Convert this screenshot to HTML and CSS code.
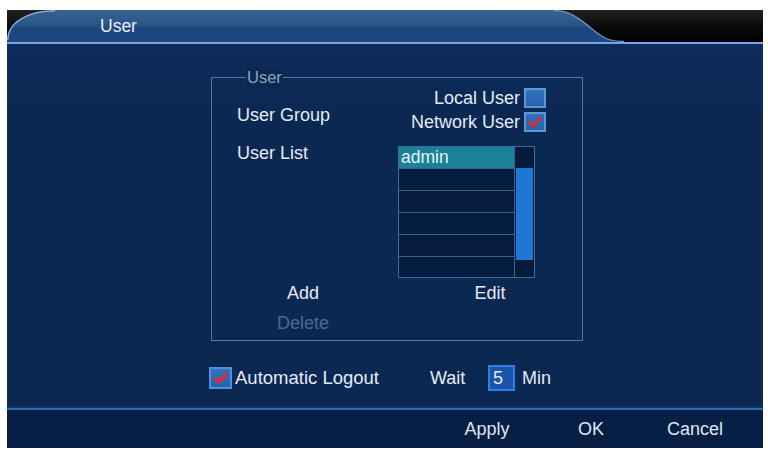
FILE: index.html
```html
<!DOCTYPE html>
<html>
<head>
<meta charset="utf-8">
<link rel="stylesheet" href="styles.css">
</head>
<body>
<div class="frame">
  <div class="titlebar">
    <div class="tab">
      <svg class="tab-bg" width="617" height="32" viewBox="0 0 617 32">
        <defs>
          <linearGradient id="tg" x1="0" y1="0" x2="0" y2="1">
            <stop offset="0" stop-color="#37628f"/>
            <stop offset="0.45" stop-color="#2b5588"/>
            <stop offset="0.6" stop-color="#1c457a"/>
            <stop offset="1" stop-color="#1d4a82"/>
          </linearGradient>
        </defs>
        <path d="M0,32 L0,30 C0,13 20,0 48,0 L547,0 C562,0 572,8 585,19 C597,29 603,32 617,32 Z" fill="url(#tg)"/>
        <path d="M0.8,30 C0.8,13 20,0.8 48,0.8" fill="none" stroke="#8fb0e0" stroke-width="1.3"/>
        <path d="M547,0.6 C562,0.6 572,8 585,19 C597,29 603,31.5 617,31.5" fill="none" stroke="#6f92c4" stroke-width="1.3"/>
      </svg>
      <span class="title">User</span>
    </div>
  </div>
  <div class="content">
    <div class="group">
      <span class="legend">User</span>
      <div class="row-group">
        <div class="label lbl-group">User Group</div>
        <div class="options">
          <div class="opt"><span>Local User</span><span class="cb"></span></div>
          <div class="opt"><span>Network User</span><span class="cb"><svg class="chk" viewBox="0 0 18 16"><path d="M3 9 L7 12.5 L15 3.5" fill="none" stroke="#e22a3c" stroke-width="3.6" stroke-linecap="round" stroke-linejoin="round"/></svg></span></div>
        </div>
      </div>
      <div class="row-list">
        <div class="label lbl-list">User List</div>
        <div class="listbox">
          <div class="rows">
            <div class="lrow sel">admin</div>
            <div class="lrow"></div>
            <div class="lrow"></div>
            <div class="lrow"></div>
            <div class="lrow"></div>
            <div class="lrow last"></div>
          </div>
          <div class="sb"><div class="thumb"></div></div>
        </div>
      </div>
      <div class="row-btns">
        <span class="btn add">Add</span>
        <span class="btn edit">Edit</span>
      </div>
      <div class="row-del">
        <span class="btn del">Delete</span>
      </div>
    </div>
    <div class="logout-row">
      <span class="cb cb-big"><svg class="chk" viewBox="0 0 18 16"><path d="M3 9 L7 12.5 L15 3.5" fill="none" stroke="#e22a3c" stroke-width="3.8" stroke-linecap="round" stroke-linejoin="round"/></svg></span>
      <span class="lbl-logout">Automatic Logout</span>
      <span class="lbl-wait">Wait</span>
      <span class="num">5</span>
      <span class="lbl-min">Min</span>
    </div>
  </div>
  <div class="sep"></div>
  <div class="footer">
    <span class="fbtn">Apply</span>
    <span class="fbtn">OK</span>
    <span class="fbtn">Cancel</span>
  </div>
</div>
</body>
</html>
```
FILE: styles.css
```css
html, body {
  margin: 0;
  padding: 0;
  background: #ffffff;
}
body {
  font-family: "Liberation Sans", Arial, sans-serif;
  font-size: 18px;
  color: #e4ebf3;
}
.frame {
  margin-left: 7px;
  margin-top: 10px;
  width: 756px;
  height: 438px;
  display: flex;
  flex-direction: column;
  background: #0b2853;
}
.titlebar {
  height: 32px;
  flex: none;
  display: flex;
  background: linear-gradient(#222222, #0a0a0a 55%, #000000);
  border-bottom: 2px solid #78a4e2;
}
.tab {
  position: relative;
  width: 617px;
  height: 32px;
  display: flex;
  align-items: center;
}
.tab-bg {
  position: absolute;
  left: 0;
  top: 0;
}
.title {
  position: relative;
  padding-left: 93px;
  font-size: 17.5px;
  color: #e8eef6;
}
.content {
  height: 364px;
  flex: none;
  background: linear-gradient(#0d2c5a, #0b2853 20%);
}
.group {
  position: relative;
  box-sizing: border-box;
  margin-top: 33px;
  margin-left: 204px;
  width: 372px;
  height: 264px;
  border: 1px solid #4e7aa8;
  padding: 9px 0 6px 0;
}
.legend {
  position: absolute;
  left: 34px;
  top: -11px;
  line-height: 20px;
  font-size: 16.5px;
  padding: 0 1px;
  background: #0b2853;
  color: #8ea2b8;
}
.label {
  line-height: 22px;
}
.row-group {
  display: flex;
  justify-content: space-between;
  padding-left: 25px;
  padding-right: 36px;
  height: 46px;
}
.lbl-group {
  margin-top: 17px;
}
.options {
  display: flex;
  flex-direction: column;
  gap: 2px;
}
.opt {
  display: flex;
  align-items: center;
  justify-content: flex-end;
  gap: 4px;
  height: 22px;
}
.cb {
  box-sizing: border-box;
  width: 22px;
  height: 20px;
  border: 2px solid #5d98d6;
  background: linear-gradient(#3372bb, #2563ad);
  display: flex;
  align-items: center;
  justify-content: center;
}
.chk {
  width: 16px;
  height: 14px;
}
.row-list {
  display: flex;
  margin-top: 9px;
  padding-left: 25px;
}
.lbl-list {
  width: 161px;
}
.listbox {
  margin-top: 4px;
  box-sizing: border-box;
  width: 137px;
  height: 132px;
  border: 1px solid #3d6b9d;
  display: flex;
  background: #061c3f;
}
.rows {
  flex: 1;
  display: flex;
  flex-direction: column;
}
.lrow {
  height: 21px;
  border-bottom: 1px solid #33639a;
  line-height: 21px;
  padding-left: 2px;
  font-size: 17.5px;
  color: #e8f2f4;
}
.lrow.last {
  border-bottom: none;
  height: 20px;
}
.lrow.sel {
  background: #1b8199;
}
.sb {
  box-sizing: border-box;
  width: 20px;
  border-left: 1px solid #33639a;
  padding: 21px 1px 0 1px;
  background: #061a3a;
}
.thumb {
  height: 92px;
  background: #1f77d4;
}
.row-btns {
  display: flex;
  margin-top: 4px;
  padding-left: 25px;
  line-height: 22px;
}
.btn {
  text-align: center;
}
.add {
  width: 132px;
}
.edit {
  margin-left: 29px;
  width: 184px;
}
.row-del {
  display: flex;
  margin-top: 8px;
  padding-left: 25px;
  line-height: 22px;
}
.del {
  width: 132px;
  color: #4b6a8d;
}
.logout-row {
  display: flex;
  align-items: center;
  height: 26px;
  margin-top: 24px;
  padding-left: 202px;
}
.cb-big {
  width: 23px;
  height: 22px;
  border-color: #4f8fdf;
}
.lbl-logout {
  margin-left: 3px;
  width: 195px;
  font-size: 18.5px;
}
.lbl-wait {
  width: 58px;
}
.num {
  box-sizing: border-box;
  width: 27px;
  height: 26px;
  border: 2px solid #2f7fe3;
  background: #1a54ab;
  padding-left: 3px;
  line-height: 22px;
}
.lbl-min {
  margin-left: 7px;
}
.sep {
  height: 2px;
  flex: none;
  background: #2c6aab;
  box-shadow: 0 0 2px #2c6aab;
}
.footer {
  height: 38px;
  flex: none;
  display: flex;
  align-items: center;
  padding-left: 428px;
  background: #071f45;
}
.fbtn {
  width: 104px;
  text-align: center;
  color: #dfe7f0;
}
```
